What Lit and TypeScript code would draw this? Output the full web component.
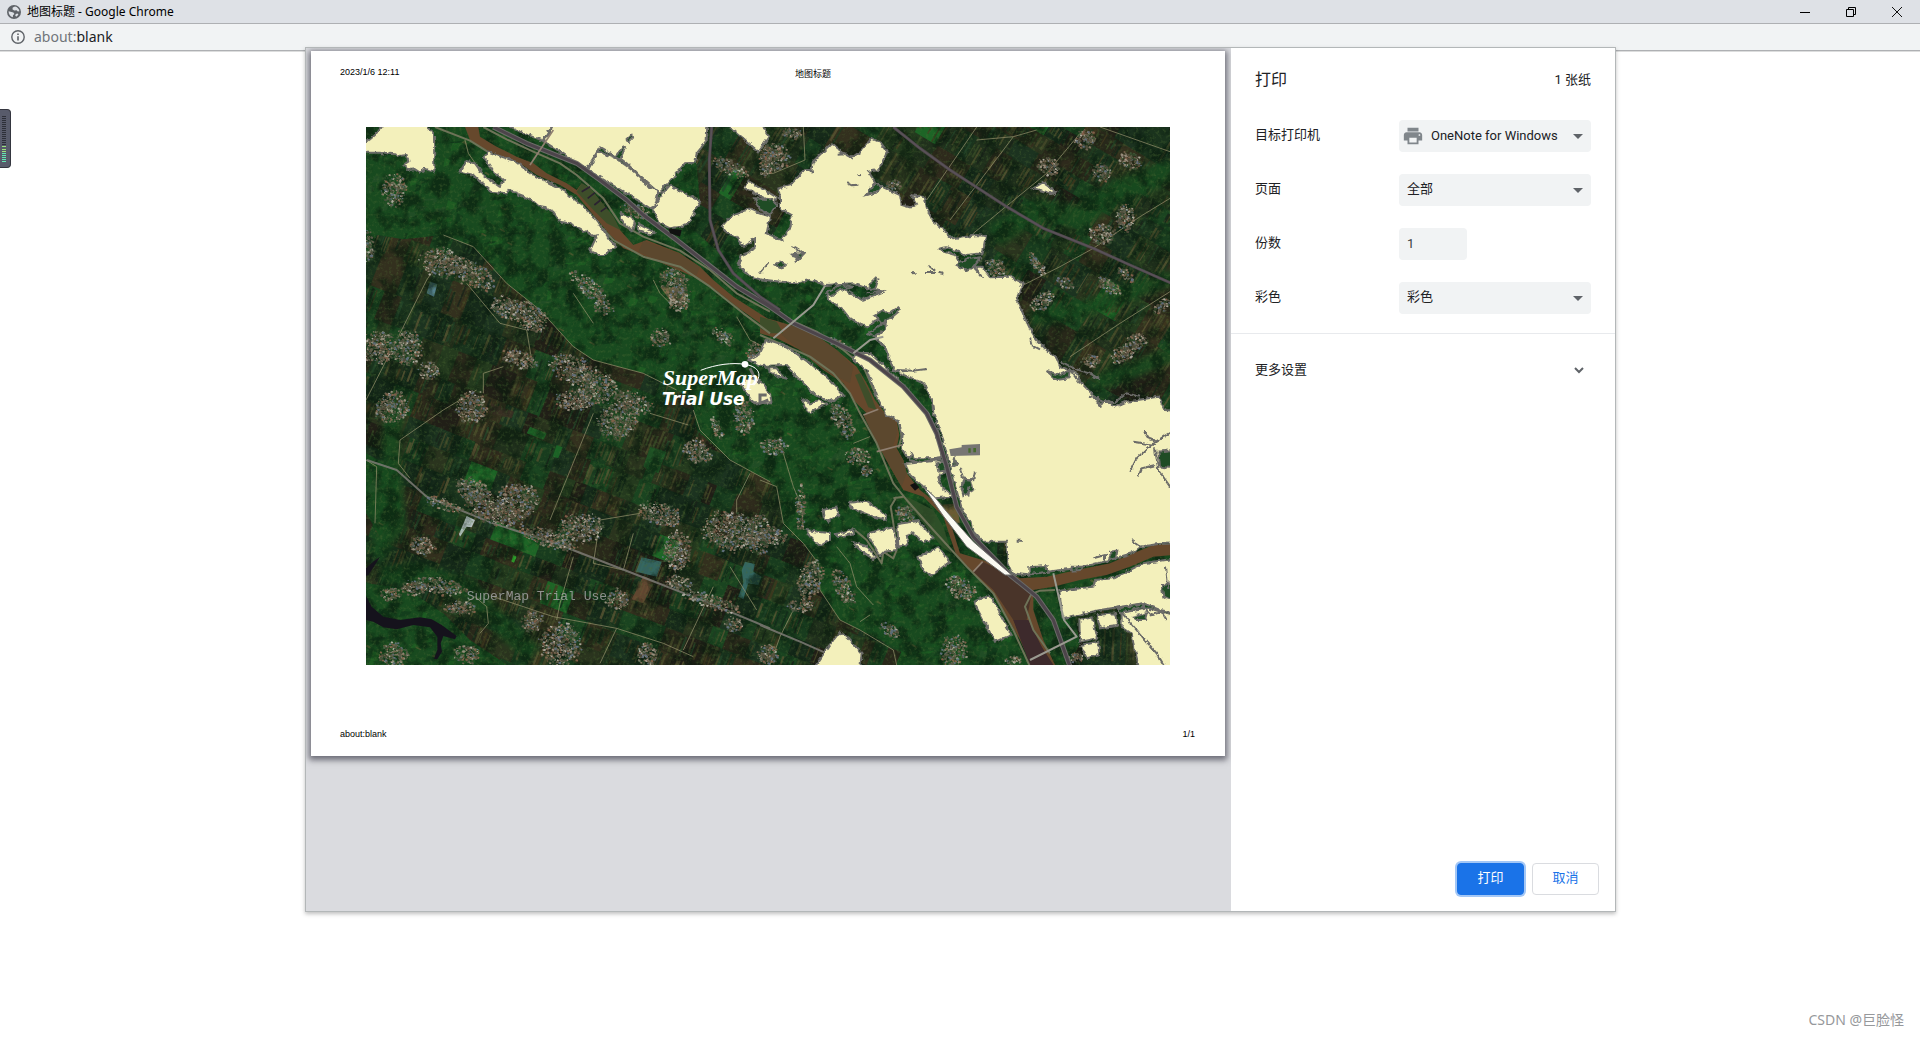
import { LitElement, html, svg, css } from "lit";
import { customElement, property, state } from "lit/decorators.js";

type Pt = [number, number];

/* Map drawing units: the image is 2412 x 1614, digitised in four sheets. */
const SHEETS: Record<string, Pt> = {
  nw: [-18, -21],
  ne: [1182, -21],
  sw: [-18, 789],
  se: [1182, 789],
};

const pts = (sheet: string, list: string): string => {
  const [dx, dy] = SHEETS[sheet];
  return list
    .trim()
    .split(/\s+/)
    .map((p) => {
      const [x, y] = p.split(",").map(Number);
      return `${x + dx},${y + dy}`;
    })
    .join(" ");
};
const shape = (sheet: string, list: string) => `M${pts(sheet, list)}Z`;
const line = (sheet: string, list: string) => `M${pts(sheet, list)}`;

let seed = 7;
const rnd = () => {
  seed = (seed * 1664525 + 1013904223) >>> 0;
  return seed / 4294967296;
};
const pick = <T>(a: T[]): T => a[Math.floor(rnd() * a.length)];

class Layer {
  paths = new Map<string, string[]>();
  add(color: string, d: string) {
    if (!this.paths.has(color)) this.paths.set(color, []);
    this.paths.get(color)!.push(d);
  }
  render() {
    return [...this.paths].map(([c, d]) => svg`<path fill=${c} d=${d.join("")}></path>`);
  }
}

/* A rotated patchwork of fields with furrow stripes. */
function fields(cx: number, cy: number, w: number, h: number, angle: number) {
  const base = new Layer();
  const furrows = new Layer();
  const cos = Math.cos(angle);
  const sin = Math.sin(angle);
  const quad = (x: number, y: number, a: number, b: number) => {
    const c = ([[x, y], [x + a, y], [x + a, y + b], [x, y + b]] as Pt[]).map(
      ([u, v]) => `${Math.round(cx + u * cos - v * sin)},${Math.round(cy + u * sin + v * cos)}`
    );
    return `M${c.join(" ")}Z`;
  };
  const soil = ["#1a331d", "#20301c", "#28281a", "#2e2a1c", "#183c1e", "#33301e", "#162a1a", "#243a1e", "#211f17", "#1a4420", "#2a341e", "#1c3320"];
  const ridge = ["#4c4d2b", "#384c27", "#13291a", "#5a5433", "#23452a", "#40391f", "#19241a", "#1f3c22", "#474a2a"];
  for (let y = -h / 2; y < h / 2; ) {
    const rh = 50 + rnd() * 60;
    for (let x = -w / 2; x < w / 2; ) {
      const rw = 28 + rnd() * 62;
      base.add(rnd() < 0.02 ? "#1d6526" : pick(soil), quad(x, y, rw + 1, rh + 1));
      if (rnd() < 0.68) {
        for (let s = 3; s < rw - 5; s += 6 + rnd() * 8) {
          if (rnd() < 0.72) {
            const t = rnd() * rh * 0.3;
            furrows.add(pick(ridge), quad(x + s, y + t, 3 + rnd() * 5, (rh - t) * (0.6 + rnd() * 0.4)));
          }
        }
      }
      x += rw;
    }
    y += rh;
  }
  return svg`${base.render()}<g opacity="0.8">${furrows.render()}</g>`;
}

/* Houses scattered inside an ellipse: sheet, centre, radii, tilt in degrees. */
const VILLAGES: [string, number, number, number, number, number][] = [
  ["nw", 240, 425, 60, 45, 10], ["nw", 330, 455, 80, 38, 30], ["nw", 440, 560, 50, 36, 20], ["nw", 510, 590, 55, 40, 35],
  ["nw", 55, 680, 55, 50, 0], ["nw", 140, 680, 45, 55, 0], ["nw", 205, 750, 32, 28, 0], ["nw", 480, 715, 55, 28, 20],
  ["nw", 640, 745, 75, 42, 20], ["nw", 710, 800, 60, 50, 0], ["nw", 100, 205, 35, 50, 0], ["nw", 25, 375, 16, 50, 0],
  ["nw", 685, 500, 70, 26, 40], ["nw", 730, 560, 32, 22, 20], ["nw", 940, 480, 45, 38, 20], ["nw", 955, 530, 36, 38, 0],
  ["nw", 900, 650, 34, 28, 0], ["nw", 1085, 645, 38, 20, 30], ["nw", 1110, 140, 60, 22, 25], ["nw", 1215, 120, 20, 50, 0],
  ["nw", 1180, 690, 26, 24, 0], ["nw", 825, 270, 45, 20, 20],
  ["ne", 45, 110, 42, 45, 30], ["ne", 95, 38, 30, 18, 0], ["ne", 975, 55, 32, 28, 0], ["ne", 865, 135, 35, 28, 0],
  ["ne", 1025, 155, 30, 28, 0], ["ne", 1110, 120, 34, 26, 20], ["ne", 1025, 340, 40, 34, 0], ["ne", 1095, 290, 30, 42, 0],
  ["ne", 705, 440, 34, 26, 20], ["ne", 830, 430, 46, 14, 50], ["ne", 915, 485, 30, 16, 30], ["ne", 845, 540, 44, 24, -30],
  ["ne", 1045, 495, 42, 20, 30], ["ne", 1095, 460, 34, 14, 30], ["ne", 1090, 695, 48, 24, -30], ["ne", 1130, 660, 28, 24, 0],
  ["ne", 1205, 555, 34, 18, -40], ["ne", 400, 190, 24, 18, 0], ["ne", 990, 720, 28, 18, 0], ["ne", 235, 670, 40, 12, 25],
  ["sw", 95, 50, 52, 48, -20], ["sw", 335, 50, 48, 50, 20], ["sw", 340, 300, 60, 34, 30], ["sw", 470, 330, 65, 55, 0],
  ["sw", 400, 360, 90, 40, 20], ["sw", 250, 340, 60, 16, 20], ["sw", 560, 440, 90, 26, 20], ["sw", 660, 410, 70, 45, 0],
  ["sw", 640, 30, 60, 32, 0], ["sw", 770, 90, 60, 56, 0], ["sw", 815, 35, 62, 32, 20], ["sw", 185, 465, 42, 26, 20],
  ["sw", 240, 585, 75, 25, 10], ["sw", 160, 590, 40, 24, 0], ["sw", 90, 610, 34, 20, 0], ["sw", 900, 370, 70, 34, 15],
  ["sw", 1110, 420, 85, 60, 10], ["sw", 950, 480, 42, 60, 0], ["sw", 1010, 180, 45, 36, 30], ["sw", 770, 625, 36, 32, 0],
  ["sw", 600, 760, 62, 65, 20], ["sw", 515, 690, 32, 34, 0], ["sw", 100, 790, 45, 35, 0], ["sw", 320, 790, 40, 28, 0],
  ["sw", 955, 575, 40, 22, 10], ["sw", 1050, 630, 95, 20, 18], ["sw", 860, 790, 32, 34, 0], ["sw", 1120, 700, 26, 24, 0],
  ["sw", 1195, 430, 38, 60, 0], ["sw", 1070, 110, 16, 36, -20], ["sw", 300, 650, 50, 20, 0], ["sw", 1150, 80, 30, 50, 0],
  ["se", 245, 85, 28, 66, -28], ["se", 290, 195, 38, 26, 0], ["se", 320, 240, 20, 18, 0], ["se", 40, 165, 42, 28, 10],
  ["se", 435, 368, 30, 30, 20], ["se", 600, 590, 50, 32, 30], ["se", 150, 565, 36, 60, 20], ["se", 250, 590, 26, 60, -25],
  ["se", 30, 440, 50, 32, 0], ["se", 120, 645, 42, 18, 0], ["se", 580, 780, 38, 48, 0], ["se", 25, 790, 34, 30, 0],
  ["se", 120, 350, 14, 70, 0], ["se", 390, 720, 40, 18, 35], ["se", 760, 808, 28, 14, 0], ["se", 945, 800, 26, 14, 0],
];

function villages() {
  const layer = new Layer();
  const roofs = ["#94836f", "#7b6c5a", "#a89c8c", "#66614f", "#8a6e56", "#3f5a38", "#2f4a2c", "#4a5440", "#8f6650", "#6a7788", "#c4bdb2", "#57503f"];
  for (const [sheet, x0, y0, rx, ry, tilt] of VILLAGES) {
    const [dx, dy] = SHEETS[sheet];
    const t = (tilt * Math.PI) / 180;
    const n = Math.round((rx * ry) / 8);
    for (let i = 0; i < n; i++) {
      const r = Math.pow(rnd(), 0.55) * (0.82 + rnd() * 0.28);
      const a = rnd() * Math.PI * 2;
      const u = Math.cos(a) * r * rx;
      const v = Math.sin(a) * r * ry;
      const x = Math.round(x0 + dx + u * Math.cos(t) - v * Math.sin(t));
      const y = Math.round(y0 + dy + u * Math.sin(t) + v * Math.cos(t));
      const s = 3 + Math.floor(rnd() * 5);
      layer.add(pick(roofs), `M${x},${y}l${s},2l-2,${s - 1}l-${s},-2Z`);
    }
  }
  return svg`<g opacity="0.85">${layer.render()}</g>`;
}

/* Slopes and clearings of the wooded hills. */
function woods() {
  const layer = new Layer();
  const tones = ["#1c6022", "#10361a", "#226a26", "#15461e", "#0d2e17", "#195420", "#28502a", "#1c4a22"];
  for (let i = 0; i < 2600; i++) {
    const x = Math.round(rnd() * 2412);
    const y = Math.round(rnd() * 1614);
    const a = 10 + Math.round(rnd() * 30);
    const b = 5 + Math.round(rnd() * 14);
    layer.add(pick(tones), `M${x},${y}l${a},${b - 9}l${-Math.round(a / 3)},${b}l${-a},${Math.round(b / 3)}Z`);
  }
  for (let i = 0; i < 190; i++) {
    const x = Math.round(rnd() * 2412);
    const y = Math.round(rnd() * 1614);
    layer.add("#6b6238", `M${x},${y}l${8 + Math.round(rnd() * 10)},8l-3,4l-14,-8Z`);
  }
  return svg`<g opacity="0.55">${layer.render()}</g>`;
}

const SW_FIELDS =
  shape("nw", "18,340 130,358 250,345 340,380 400,440 440,490 540,570 640,680 700,720 850,760 950,810 1000,850 1010,930 1110,1020 1230,1085 1255,1110 1270,1210 1330,1270 1375,1330 1380,1410 1440,1500 1500,1530 1620,1590 1650,1640 450,1640 330,1560 250,1480 160,1420 100,1400 18,1390 18,1180 60,1250 120,1160 110,1050 18,1000");
const NE_FIELDS =
  shape("nw", "1000,21 2430,21 2430,870 2100,870 1900,600 1840,380 1400,140 1330,170 1200,420 1070,390 1000,330 930,320 1020,250");
const SE_FIELDS = shape("se", "665,455 742,455 742,530 690,500") + shape("se", "940,650 1130,650 1160,840 920,840 960,760");

const LAND = [
  shape("nw", "10,98 10,75 45,45 70,10 185,10 222,38 223,155 205,150 195,145 180,158 165,148 148,150 130,135 145,125 140,105 115,108 110,100 90,98 80,103 60,98"),
  shape("nw", "372,112 385,95 430,112 470,125 520,165 560,185 610,210 640,235 665,255 700,290 730,330 750,360 770,382 745,393 738,405 715,405 690,392 700,370 712,346 700,348 640,315 625,310 600,305 580,275 560,265 540,262 515,240 475,225 470,215 445,210 440,220 395,215 360,185 340,165 300,155 320,122 345,130 370,165 418,200 432,180 400,155"),
  shape("nw", "432,10 578,10 548,62 530,55 490,40"),
  shape("nw", "582,10 1042,10 1040,60 1022,85 1010,100 1005,128 975,130 900,218 860,195 840,170 800,130 780,115 765,108 720,82 680,146 650,130 600,95 552,65"),
  shape("nw", "714,94 765,114 800,138 850,178 895,217 885,258 870,265 840,245 790,215 740,185 684,150"),
  shape("nw", "930,195 1020,245 985,310 960,320 930,325 900,310 877,268 905,224"),
  shape("nw", "785,280 825,300 817,332 800,320 782,295"),
  shape("nw", "835,312 885,338 875,343 832,330"),
  shape("nw", "1095,10 1205,10 1226,50 1195,95 1150,55"),
  shape("nw", "1165,183 1230,220 1250,232 1245,250 1155,205"),
  shape("ne", "155,150 158,125 215,70 235,85 245,100 280,110 300,95 335,55 362,68 382,95 355,150 325,155 345,185 320,225 335,220 365,200 420,225 425,255 450,262 470,250 455,225 495,232 500,262 515,300 545,325 580,358 620,350 650,345 678,348 668,400 620,405 560,382 540,385 550,395 585,405 600,430 640,440 665,440 690,472 750,470 790,490 770,535 795,595 812,630 830,660 860,690 890,715 900,740 950,760 965,790 1000,825 1010,850 1040,845 1065,860 1100,845 1195,830 1215,870 1250,872 1250,1270 1195,1272 1140,1280 1115,1300 1030,1325 950,1345 860,1355 800,1365 755,1360 742,1330 740,1265 668,1265 640,1235 635,1205 610,1180 595,1130 570,1040 550,960 520,880 515,835 490,790 420,760 400,750 375,680 345,655 380,620 380,590 350,600 320,620 300,615 265,590 245,565 205,540 200,520 250,505 305,540 370,515 320,505 280,490 195,495 150,480 100,490 0,478 -30,470 -65,435 -55,405 -30,395 -15,380 -15,355 -50,380 -70,350 -100,340 -115,320 -90,290 -50,275 -35,265 0,280 30,290 20,340 65,360 92,320 95,285 60,265 60,230 55,205 90,195 135,150"),
  shape("ne", "275,715 300,698 330,700 380,745 415,780 450,815 475,850 500,880 530,930 548,1010 470,1022 440,1010 425,985 428,940 412,900 380,885 350,830 320,750"),
  shape("se", "435,222 548,210 560,240 535,262 545,290 580,320 525,325 490,290 450,255"),
  shape("ne", "-35,720 0,700 18,660 80,680 150,730 210,780 250,825 210,845 165,825 100,760 78,735 0,738"),
  shape("ne", "20,745 50,745 75,775 55,770"),
  shape("ne", "0,780 30,820 35,850 -20,850 -60,790 -30,775"),
  shape("se", "125,25 150,40 175,30 200,40 150,70 135,55"),
  shape("se", "188,360 230,352 238,372 205,395 192,388"),
  shape("se", "268,338 320,332 350,352 375,375 380,390 340,380 275,355"),
  shape("se", "138,420 210,430 210,450 180,468 150,440"),
  shape("se", "230,432 280,418 282,430 232,442"),
  shape("se", "275,455 320,468 345,500 340,508 300,480"),
  shape("se", "322,430 400,412 412,470 410,480 375,485 360,500 345,475"),
  shape("se", "412,402 475,393 520,443 490,460 460,428 440,435 445,462 415,470"),
  shape("se", "475,500 535,472 570,515 515,557 485,535"),
  shape("se", "640,635 690,615 755,735 705,755"),
  shape("se", "240,725 265,745 305,790 300,845 155,845 205,770"),
  shape("se", "898,602 1000,590 1005,570 1060,565 1150,520 1250,505 1250,670 1200,660 1150,640 1020,660 908,685"),
  shape("se", "958,690 998,682 1012,745 960,755"),
  shape("se", "1010,675 1065,670 1072,708 1020,715"),
  shape("se", "962,765 1015,755 1018,795 980,805"),
  shape("se", "1085,668 1165,655 1250,680 1250,845 1140,845 1120,760 1115,730 1085,710"),
  shape("ne", "820,205 848,187 888,215 880,222"),
].join("");

/* Ditches and groves that interrupt the open land. */
const GAPS = [
  shape("ne", "45,435 60,425 78,432 65,445"),
  shape("ne", "325,495 345,475 355,478 345,508 330,510"),
  shape("ne", "345,585 370,570 385,582 415,562 422,570 395,592 365,608"),
  shape("ne", "325,640 375,605 378,625 345,650"),
  shape("ne", "200,520 240,495 285,500 240,510 215,528"),
  shape("ne", "590,435 620,418 660,412 640,440 620,452"),
  shape("ne", "92,404 112,400 130,402 108,428 114,408"),
  shape("ne", "318,225 345,190 362,202 350,218"),
  shape("ne", "-15,235 35,238 50,255 30,285 0,270"),
  shape("ne", "860,753 900,765 930,750 925,775 890,780"),
  shape("se", "455,190 465,205 540,205 480,218 450,210"),
  shape("se", "585,205 590,225 578,230"),
  shape("se", "530,220 555,212 565,240 535,245"),
  shape("se", "610,268 632,268 640,300 610,318 604,290"),
  shape("se", "808,532 860,528 862,545 808,552"),
  shape("se", "1050,485 1072,482 1068,505 1052,508"),
  shape("se", "935,530 970,530 960,540 935,542"),
  shape("se", "1195,185 1240,180 1240,235 1200,230"),
  shape("se", "1205,585 1240,582 1240,630 1210,620"),
  shape("se", "1075,655 1150,640 1150,650 1080,668"),
  shape("se", "1120,680 1160,670 1155,690 1125,690"),
  shape("nw", "800,60 815,45 820,52 805,68"),
  shape("nw", "767,108 790,80 795,84 780,118"),
];
const DITCHES = [
  line("ne", "263,190 275,196 292,194"), line("ne", "505,437 522,450"), line("ne", "495,456 525,456"), line("ne", "535,458 550,462"),
  line("ne", "453,460 467,459"), line("ne", "95,378 115,390 130,402 105,430"), line("ne", "0,460 25,430"), line("ne", "320,520 370,515"),
  line("ne", "410,750 460,752 500,747"), line("ne", "640,440 670,475"), line("ne", "640,442 660,418"), line("ne", "233,104 255,103 280,116"),
  line("ne", "145,150 160,158"), line("ne", "295,166 303,165"), line("ne", "810,655 815,675 840,688"),
  line("ne", "905,725 940,745 990,760 1020,778 1000,770"), line("ne", "930,750 960,790"),
  line("se", "1110,245 1130,205 1180,160 1230,128"), line("se", "1150,120 1165,145 1190,155"), line("se", "1120,155 1150,160 1185,165"),
  line("se", "1135,260 1145,235 1185,225"), line("se", "1185,175 1195,240 1230,290"), line("se", "1010,20 1020,50"),
  line("se", "1115,450 1140,468"), line("se", "1000,505 1035,495 1035,515"), line("se", "770,452 786,452"), line("se", "990,20 1060,40 1100,10 1140,20"),
  line("se", "600,235 610,265 640,270 645,245"), line("se", "628,290 625,320"), line("se", "1085,668 1130,720 1190,790 1215,830"),
  line("se", "1150,650 1175,675 1205,665 1220,690"), line("se", "1218,530 1225,600"),
];

const RIVER = [
  shape("nw", "315,21 355,21 360,50 410,80 470,110 520,130 560,160 620,190 650,210 665,190 690,205 760,290 780,330 820,375 860,360 960,400 1020,440 1060,480 1120,530 1230,600 1290,640 1270,655 1200,610 1130,560 1060,505 1000,470 920,435 860,410 830,400 790,385 750,345 700,285 650,225 600,195 530,165 480,130 420,110 370,85 330,60"),
  shape("ne", "0,590 40,600 90,615 160,640 230,690 290,740 320,790 345,840 380,885 410,900 418,945 410,985 430,1020 440,1060 480,1110 530,1150 560,1190 575,1220 600,1300 650,1315 700,1330 780,1375 860,1370 950,1350 1050,1330 1120,1300 1180,1275 1240,1270 1240,1305 1180,1310 1110,1340 1040,1365 960,1380 880,1400 820,1410 820,1470 850,1560 890,1645 820,1645 780,1560 730,1470 690,1410 620,1340 590,1310 570,1250 550,1190 490,1130 430,1110 390,1040 350,960 320,880 280,840 250,790 190,750 120,690 50,655 0,640"),
];
const SHOALS = [
  shape("nw", "665,190 690,205 760,290 780,330 740,310 700,270 650,215"),
  shape("ne", "0,590 50,605 70,640 30,640 0,625"),
  shape("ne", "285,765 300,760 330,820 350,870 325,862"),
  shape("se", "425,318 450,325 520,360 550,410 575,490 545,470 490,400"),
];
const DARK_WATER = [
  shape("nw", "835,395 850,362 960,402 1020,442 1010,465 920,435") + shape("ne", "65,645 90,615 160,640 230,690 280,740 270,790 190,750 120,690") +
    shape("se", "310,75 355,58 405,85 412,130 400,165 430,210 440,250 425,290 390,230 345,150"),
  shape("se", "640,545 668,515 780,570 815,610 800,690 850,780 800,780 760,690 700,600"),
];

const HIGHWAYS = [
  line("nw", "400,21 500,70 650,130 720,180 800,240 850,285 950,360 1040,430 1130,500 1230,560 1300,610 1430,670 1530,720 1630,800 1700,880 1730,940 1760,1040 1790,1160 1840,1250 1950,1365 2030,1430 2080,1500 2130,1640"),
  line("nw", "1055,21 1048,120 1050,300 1075,390 1120,460 1200,530 1260,570"),
  line("ne", "400,21 480,85 570,150 740,260 850,325 1000,385 1110,435 1235,490"),
];
const ROADS = [
  line("sw", "20,210 110,240 200,320 400,400 600,465 870,570 1050,640 1230,715"),
  line("se", "0,705 120,755 200,790"),
];
const TRACKS = [
  line("sw", "350,0 250,60 120,150 115,220 150,265"), line("sw", "18,210 50,230 45,400"), line("sw", "700,70 635,230 590,340 570,390"),
  line("sw", "870,70 985,105"), line("sw", "1000,60 1020,120 1110,210 1230,275"), line("sw", "1170,250 1130,330 1130,370"),
  line("sw", "840,370 720,390 700,520 790,540 820,430"), line("sw", "400,620 580,680 770,715 910,760 1000,800"), line("sw", "770,715 720,820"),
  line("sw", "1110,530 1190,660"), line("sw", "1060,590 970,780"), line("sw", "640,500 600,640 590,690"), line("sw", "300,650 345,620 380,650 385,700 360,730"),
  line("nw", "18,840 110,660 200,480 240,420"), line("nw", "320,490 420,610 500,630 515,720"), line("nw", "370,820 370,760 430,740"),
  line("nw", "250,345 340,380 440,490 540,570 640,680 700,720 850,760 950,810"), line("nw", "315,60 325,100 360,150"),
  line("nw", "880,480 900,520 940,560"), line("nw", "640,520 700,610"), line("nw", "1130,590 1170,660 1210,680"),
  line("ne", "650,21 500,240"), line("ne", "760,50 730,90 570,300"), line("ne", "960,40 860,160 740,258 640,340"),
  line("ne", "1230,235 1140,290 1000,385 900,440 780,500"), line("ne", "1230,515 1080,610 930,710"), line("ne", "1020,21 1230,95"),
  line("ne", "130,21 135,120 40,160 0,160"), line("ne", "650,60 760,50 830,30"),
  line("se", "0,270 50,290 70,400 130,460 175,520 180,600 240,690 300,720 400,780 410,825"), line("se", "70,190 100,290 125,350 130,420"),
  line("se", "230,470 270,520 290,590 340,645"), line("se", "100,660 60,740 30,825"), line("se", "330,675 300,695"),
  line("se", "280,160 330,140"),
];
const BANKS = [
  line("nw", "225,21 330,62 420,118 500,158 600,210 680,275 760,360 850,410 960,440 1050,500 1150,580 1230,640"),
  line("nw", "370,21 440,58 520,95 600,130 650,165 730,235 780,310 850,350 960,392 1050,450 1130,520 1230,575"),
  line("ne", "0,645 60,670 150,710 220,760 270,820 300,880 350,970 400,1090 440,1140 520,1230 620,1340 700,1420 760,1530 810,1640"),
  line("ne", "90,600 170,635 250,690 310,740 350,830 385,885 415,900 425,950 415,985"),
  line("se", "815,610 795,650 820,720 870,790"), line("se", "815,612 840,602 885,600"), line("se", "400,325 430,320"),
  line("se", "285,420 320,450 365,520 370,485 400,505 410,480 400,400 392,350 410,320"),
];

const BLACK_RIVER = shape("sw", "18,618 35,650 70,680 120,690 180,682 215,688 245,705 290,738 285,748 250,738 242,760 246,785 232,808 222,806 232,780 232,740 210,712 160,705 110,718 70,712 40,695 18,690") +
  shape("sw", "18,535 40,515 60,500 45,525 25,555 18,558");

@customElement("satellite-map")
export class SatelliteMap extends LitElement {
  static styles = css`
    :host { display: block; }
    .map { display: block; width: 100%; height: auto; }
    .map filter { color-interpolation-filters: sRGB; }
    .brand { font: italic bold 66px "Liberation Serif", "Times New Roman", serif; fill: #fff; }
    .trial { font: italic bold 51px "DejaVu Sans", Verdana, sans-serif; fill: #fff; }
    .mark { font: 39px "Liberation Mono", "Courier New", monospace; fill: #a3a3a3; opacity: 0.85; }
  `;

  render() {
    seed = 7;
    return html`<svg class="map" viewBox="0 0 2412 1614" role="img" aria-label="SuperMap">
      <defs>
        <clipPath id="sw"><path d=${SW_FIELDS}></path></clipPath>
        <clipPath id="ne"><path d=${NE_FIELDS}></path></clipPath>
        <clipPath id="se"><path d=${SE_FIELDS}></path></clipPath>
        <filter id="shade" x="0" y="0" width="100%" height="100%">
          <feTurbulence type="fractalNoise" baseFrequency="0.02" numOctaves="5" seed="4"></feTurbulence>
          <feColorMatrix values="0 0 0 0 0.03  0 0 0 0 0.1  0 0 0 0 0.05  4 0 0 0 -1.75"></feColorMatrix>
        </filter>
        <filter id="grain" x="0" y="0" width="100%" height="100%">
          <feTurbulence type="fractalNoise" baseFrequency="0.1" numOctaves="3" seed="9"></feTurbulence>
          <feColorMatrix values="0 0 0 0 0.3  0 0 0 0 0.42  0 0 0 0 0.2  0 3 0 0 -1.5"></feColorMatrix>
        </filter>
        <filter id="rough" x="-2%" y="-2%" width="104%" height="104%">
          <feTurbulence type="fractalNoise" baseFrequency="0.07" numOctaves="2" seed="3"></feTurbulence>
          <feDisplacementMap in="SourceGraphic" scale="14" xChannelSelector="R" yChannelSelector="G"></feDisplacementMap>
        </filter>
        <filter id="soft"><feGaussianBlur stdDeviation="9"></feGaussianBlur></filter>
      </defs>
      <rect width="2412" height="1614" fill="#184a1f"></rect>
      ${woods()}
      <g clip-path="url(#ne)">${fields(1800, 400, 1900, 1700, 0.54)}</g>
      <g clip-path="url(#sw)">${fields(750, 1100, 1900, 1800, 0.37)}</g>
      <g clip-path="url(#se)">${fields(2100, 1400, 700, 700, 0.05)}</g>
      <g fill="none" stroke="#184a1f" stroke-opacity="0.85" filter="url(#soft)">
        <path stroke-width="70" d=${line("ne", "700,350 830,270 960,290 1080,210 1240,150")}></path>
        <path stroke-width="50" d=${line("ne", "810,590 930,580 1080,530 1240,470")}></path>
        <path stroke-width="50" d=${line("ne", "1010,790 1120,750 1240,700")}></path>
        <path stroke-width="60" d=${line("sw", "110,60 90,160 100,300 110,400 40,500")}></path>
        <path stroke-width="60" d=${line("sw", "60,560 180,550 330,600 420,700 520,790")}></path>
      </g>
      <g fill="#39706c" opacity="0.85">
        <path d=${shape("sw", "845,502 905,515 890,560 828,545")}></path>
        <path d=${shape("sw", "1155,515 1185,522 1180,545 1205,560 1195,585 1165,580 1150,628 1135,620 1150,580 1145,540")}></path>
        <path fill="#6b4a33" d=${shape("sw", "850,558 885,572 850,640 815,628")}></path>
        <path fill="#1c6b28" d=${shape("sw", "510,110 560,130 550,150 500,130")}></path>
        <path fill="#1c6b28" d=${shape("sw", "590,165 608,172 595,205 578,200")}></path>
        <path fill="#1d5826" d=${shape("sw", "870,170 920,185 895,250 850,230")}></path>
        <path fill="#34c832" d=${shape("sw", "460,495 470,500 462,518 454,514")}></path>
        <path fill="#3a2f24" d=${shape("sw", "395,40 462,65 455,85 385,70")}></path>
        <path fill="#c9d3d8" d=${shape("sw", "320,378 345,390 335,412 320,410 300,440 297,432")}></path>
        <path fill="#5f8fa0" d=${shape("nw", "210,485 232,492 222,530 200,520")}></path>
        <path fill="#9a7d58" d=${shape("nw", "900,500 970,505 980,540 960,565 930,540")}></path>
        <path fill="#7b5f38" d=${shape("se", "540,345 590,340 600,400 580,400")}></path>
      </g>
      <rect width="2412" height="1614" filter="url(#shade)" opacity="0.6"></rect>
      <rect width="2412" height="1614" filter="url(#grain)" opacity="0.4"></rect>
      <g fill="none" stroke-linejoin="round">
        <path stroke="#8f8c68" stroke-width="3" opacity="0.75" d=${TRACKS.join("")}></path>
        <path stroke="#7d7a74" stroke-width="6" opacity="0.85" d=${ROADS.join("")}></path>
      </g>
      ${villages()}
      <path fill="#15121c" d=${BLACK_RIVER}></path>
      <path fill="#66482c" d=${RIVER.join("")}></path>
      <path fill="#34502a" opacity="0.8" d=${SHOALS.join("")}></path>
      <path fill="#5c482e" d=${DARK_WATER[0]}></path>
      <path fill="#493429" d=${DARK_WATER[1]}></path>
      <path fill="#3d2a2c" d=${shape("se", "760,690 805,690 845,770 890,840 815,840")}></path>
      <g fill="none" stroke-linejoin="round">
        <path stroke="#6e7358" stroke-width="6" d=${BANKS.join("")}></path>
      </g>
      <g filter="url(#rough)">
        <path fill="#f3f0bb" stroke="#6b6b68" stroke-width="6" d=${LAND}></path>
        <path fill="#1f4c25" stroke="#6b6b68" stroke-width="6" d=${GAPS.join("")}></path>
        <path fill="none" stroke="#6b6b68" stroke-width="6" d=${DITCHES.join("")}></path>
      </g>
      <path fill="#777673" d=${shape("se", "568,178 605,172 605,165 660,162 660,196 572,198")}></path>
      <path fill="#456a2c" d=${shape("se", "625,175 632,175 632,188 625,188") + shape("se", "640,174 648,174 648,187 640,187")}></path>
      <g fill="none" stroke-linejoin="round">
        <path stroke="#6b6b68" stroke-width="15" d=${HIGHWAYS[0]}></path>
        <path stroke="#4c444a" stroke-width="9" d=${HIGHWAYS.join("")}></path>
        <path stroke="#5a5258" stroke-width="5" d=${HIGHWAYS.slice(1).join("")}></path>
        <path stroke="#9a9a90" stroke-width="6" d=${line("ne", "195,497 160,555 100,605 40,655") + line("ne", "280,700 330,660 370,650") + line("se", "880,550 912,690 950,740 810,810")}></path>
        <path stroke="#8f7f70" stroke-width="5" d=${line("se", "310,75 355,58") + line("se", "350,185 425,165") + line("nw", "580,30 510,135") + line("se", "640,545 668,515")}></path>
        <path stroke="#2b2230" stroke-width="5" d=${line("nw", "665,215 690,200") + line("nw", "683,235 705,218") + line("nw", "703,255 722,240") + line("nw", "722,275 740,262")}></path>
      </g>
      <path fill="#fbfaf2" stroke="#6b6b68" stroke-width="3" d=${shape("se", "490,290 525,322 560,365 640,455 755,555 735,555 620,470 550,378")}></path>
      <path fill="#111" d=${shape("nw", "925,325 965,330 960,350 930,340") + shape("se", "450,285 465,278 478,292 465,302")}></path>
      <path fill="none" stroke="#6b6b68" stroke-width="9" d=${line("ne", "25,840 0,850 0,825 20,825") + line("ne", "-30,745 -15,775 0,790")}></path>
      <path fill="none" stroke="#fff" stroke-width="3" d="M1004 730C1050 712 1100 706 1137 712C1182 720 1190 745 1164 775"></path>
      <circle cx="1137" cy="712" r="10" fill="#fff"></circle>
      <text class="brand" x="890" y="774">SuperMap</text>
      <text class="trial" x="888" y="833">Trial Use</text>
      <text class="mark" x="302" y="1418">SuperMap Trial Use</text>
    </svg>`;
  }
}

@customElement("print-row")
export class PrintRow extends LitElement {
  static styles = css`
    :host { display: block; }
    .row { display: flex; align-items: center; }
    .label { flex: 1; padding-bottom: 2px; }
    .box { display: grid; align-items: center; width: 192px; height: 32px; border-radius: 4px; background: #f1f3f4; box-sizing: border-box; }
    .box > * { grid-area: 1 / 1; }
    .box.short { width: 68px; margin-right: 124px; }
    .field { appearance: none; width: 100%; height: 32px; box-sizing: border-box; margin: 0; padding: 0 24px 2px 8px; border: 0; outline: 0; border-radius: 4px; background: transparent; color: #202124; font: inherit; }
    .field.number { padding-right: 8px; color: #3c4043; }
    .field.number::-webkit-inner-spin-button { appearance: none; }
    .field.iconed { padding-left: 32px; padding-bottom: 0; }
    .arrow { justify-self: end; margin-right: 8px; pointer-events: none; }
    .printer { margin-left: 3px; pointer-events: none; }
  `;
  @property() label = "";
  @property() value = "";
  @property() kind: "select" | "number" | "printer" = "select";
  @property({ attribute: false }) options: string[] = [];

  render() {
    const short = this.kind === "number";
    return html`<div class="row">
      <label class="label" for="field">${this.label}</label>
      <div class="box ${short ? "short" : ""}">
        ${short
          ? html`<input id="field" class="field number" type="number" min="1" .value=${this.value} />`
          : html`<select id="field" class="field ${this.kind === "printer" ? "iconed" : ""}">
                ${this.options.map((o) => html`<option ?selected=${o === this.value}>${o}</option>`)}
              </select>
              <svg class="arrow" width="10" height="5" viewBox="0 0 10 5" aria-hidden="true"><path fill="#5f6368" d="M0 0h10L5 5z"></path></svg>`}
        ${this.kind === "printer"
          ? html`<svg class="printer" width="22" height="22" viewBox="0 0 24 24" aria-hidden="true">
              <path fill="#80868b" d="M19 8H5c-1.66 0-3 1.34-3 3v6h4v4h12v-4h4v-6c0-1.66-1.34-3-3-3zm-3 11H8v-5h8v5zm3-7c-.55 0-1-.45-1-1s.45-1 1-1 1 .45 1 1-.45 1-1 1zm-1-9H6v4h12V3z"></path>
            </svg>`
          : ""}
      </div>
    </div>`;
  }
}

@customElement("app-root")
export class AppRoot extends LitElement {
  static styles = css`
    :host { display: block; font: 13px/20px Roboto, "Noto Sans CJK SC", sans-serif; color: #202124; }
    .window { position: relative; display: flex; flex-direction: column; min-height: 100vh; background: #fff; overflow: hidden; }
    .titlebar { display: flex; align-items: center; gap: 6px; height: 23px; padding: 0 18px 0 7px; background: #dee1e6; border-bottom: 1px solid #aeb0b3; color: #000; font: 12px/22px "Noto Sans", "Noto Sans CJK SC", sans-serif; }
    .caption { flex: 1; }
    .controls { display: flex; gap: 36px; height: 20px; align-items: center; }
    .control { display: flex; padding: 0; border: 0; background: none; }
    .toolbar { display: flex; align-items: center; gap: 9px; height: 26px; padding-left: 11px; background: #f1f3f4; border-bottom: 1px solid #aeb0b3; box-shadow: 0 1px #dcdddd; font: 14px/24px "Noto Sans", sans-serif; color: #202124; }
    .scheme { color: #70757a; }
    .meter { position: absolute; left: 0; top: 109px; display: flex; flex-direction: column; justify-content: space-between; align-items: flex-end; width: 6px; height: 46px; padding: 6px 4px 5px 0; border: 1px solid #34363f; border-left: 0; border-radius: 0 4px 4px 0; background: #585b6b; }
    .tick { width: 4px; height: 1px; background: #2d2f38; }
    .tick.on { background: #62e8b4; }
    .tick.top { background: #9be37c; }
    .dialog { position: absolute; inset: 47px 304px 126px 305px; display: flex; border: 1px solid #b3b7b8; background: #fff; box-shadow: 0 2px 4px rgba(0, 0, 0, 0.25); }
    .preview { flex: 1; min-width: 0; box-sizing: border-box; padding: 3px 6px 0 5px; background: #dadbdf; overflow: hidden; }
    .paper { display: flex; flex-direction: column; background: #fff; box-shadow: 0 2px 6px 2px rgba(60, 60, 72, 0.7); font: 9px/12px "Liberation Sans", "Noto Sans CJK SC", sans-serif; color: #000; }
    .runner { display: grid; grid-template-columns: 5fr auto 4fr; padding: 15px 30px 0 29px; }
    .heading { padding-top: 2px; }
    .picture { margin: 47px 55px 0; }
    .runner.foot { padding: 63px 30px 16px 29px; }
    .end { text-align: right; }
    .settings { display: flex; flex-direction: column; width: 384px; box-sizing: border-box; overflow: hidden; }
    .head { display: flex; justify-content: space-between; align-items: center; padding: 20px 24px 0; line-height: 24px; }
    .title { margin: 0; font-size: 16px; font-weight: 400; }
    .form { display: flex; flex-direction: column; gap: 22px; padding: 28px 24px 19px; border-bottom: 1px solid #e8eaed; }
    .more { display: flex; justify-content: space-between; align-items: center; margin: 0; padding: 26px 31px 24px 24px; border: 0; background: none; font: inherit; color: inherit; }
    .actions { display: flex; justify-content: flex-end; gap: 8px; margin-top: auto; padding: 0 16px 16px; }
    .button { width: 67px; height: 32px; padding: 0 0 2px; border: 1px solid #dadce0; border-radius: 4px; background: #fff; color: #1a73e8; font: inherit; }
    .button.primary { border-color: #1a73e8; background: #1a73e8; color: #fff; box-shadow: 0 0 0 2px #a3c7f6; }
    .credit { position: absolute; right: 16px; bottom: 8px; font: 14px/20px "Noto Sans", "Noto Sans CJK SC", sans-serif; color: #96989b; }
  `;

  @state() private copies = "1";

  render() {
    return html`<div class="window">
      <header class="titlebar">
        <svg width="14" height="14" viewBox="0 0 14 14" aria-hidden="true">
          <circle cx="7" cy="7" r="7" fill="#5f6368"></circle>
          <path fill="#dee1e6" d="M8 1.5 5.8 2.6 5.4 4.2 7.2 5.6 9.6 5.2 10.8 6.6 12.4 6.2C12.2 4 10.4 1.9 8 1.5zM1.6 6.2 4.4 7 6.4 7.4 7.4 9 6 10.2 5.8 12.2C3.2 11.6 1.4 9 1.6 6.2zM8.8 9 10.6 8.6 11.4 9.8 9.2 11.8 8.2 10.6z"></path>
        </svg>
        <span class="caption">地图标题 - Google Chrome</span>
        <div class="controls">
          <button class="control" aria-label="最小化"><svg width="10" height="10"><path stroke="#000" d="M0 5.5h10"></path></svg></button>
          <button class="control" aria-label="还原"><svg width="10" height="10"><path fill="none" stroke="#000" d="M.5 2.5h7v7h-7zM2.5 2.5v-2h7v7h-2"></path></svg></button>
          <button class="control" aria-label="关闭"><svg width="10" height="10"><path stroke="#111" d="M0 0l10 10M10 0L0 10"></path></svg></button>
        </div>
      </header>
      <nav class="toolbar">
        <svg width="14" height="14" viewBox="0 0 14 14" aria-hidden="true">
          <circle cx="7" cy="7" r="6.2" fill="none" stroke="#5f6368" stroke-width="1.4"></circle>
          <path fill="#5f6368" d="M6.2 6.2h1.6V10.5H6.2zM6.2 3.5h1.6v1.5H6.2z"></path>
        </svg>
        <span><span class="scheme">about:</span>blank</span>
      </nav>
      <aside class="meter" aria-hidden="true">
        ${Array.from({ length: 23 }, (_, i) => html`<i class="tick ${i > 17 ? "on" : i > 14 ? "top" : ""}"></i>`)}
      </aside>
      <section class="dialog" role="dialog" aria-label="打印">
        <div class="preview">
          <article class="paper">
            <div class="runner"><span>2023/1/6 12:11</span><span class="heading">地图标题</span></div>
            <satellite-map class="picture"></satellite-map>
            <div class="runner foot"><span>about:blank</span><span></span><span class="end">1/1</span></div>
          </article>
        </div>
        <div class="settings">
          <div class="head"><h1 class="title">打印</h1><span>1 张纸</span></div>
          <div class="form">
            <print-row kind="printer" label="目标打印机" value="OneNote for Windows" .options=${["OneNote for Windows"]}></print-row>
            <print-row label="页面" value="全部" .options=${["全部"]}></print-row>
            <print-row kind="number" label="份数" .value=${this.copies}></print-row>
            <print-row label="彩色" value="彩色" .options=${["彩色"]}></print-row>
          </div>
          <button class="more">更多设置
            <svg width="10" height="7" viewBox="0 0 10 7" aria-hidden="true"><path fill="none" stroke="#5f6368" stroke-width="2" d="M1 1l4 4 4-4"></path></svg>
          </button>
          <div class="actions"><button class="button primary">打印</button><button class="button">取消</button></div>
        </div>
      </section>
      <div class="credit">CSDN @巨脸怪</div>
    </div>`;
  }
}
